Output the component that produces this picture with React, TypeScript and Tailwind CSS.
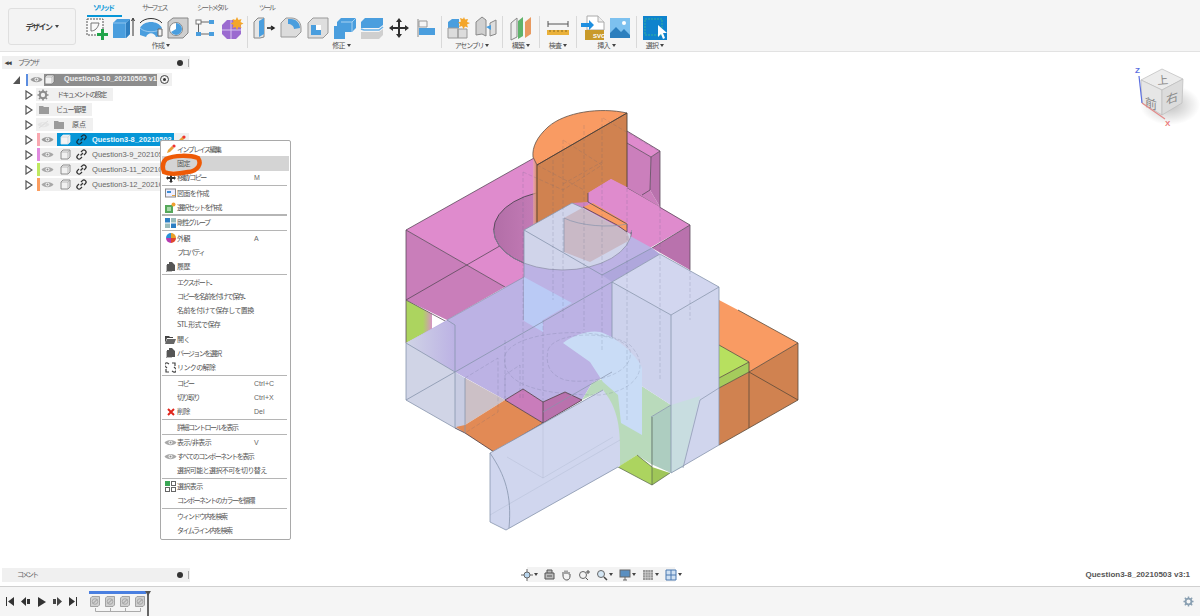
import React from "react";

const JP = "font-['Noto_Sans_CJK_JP','Liberation_Sans',sans-serif]";

function Eye({ off = false, dark = false }: { off?: boolean; dark?: boolean }) {
  return (
    <svg width="13" height="9" viewBox="0 0 13 9" className="shrink-0">
      <path d="M.5 4.5C3 1 10 1 12.5 4.5 10 8 3 8 .5 4.5Z" fill={off ? "#e4e4e4" : dark ? "#9a9a9a" : "#a8a8a8"} />
      <circle cx="6.5" cy="4.5" r="2" fill={off ? "#efefef" : "#f1f1f1"} />
      <circle cx="6.5" cy="4.5" r="1" fill={off ? "#ddd" : "#8d8d8d"} />
      {off && <path d="M2 8 11 1" stroke="#ddd" strokeWidth="1" />}
    </svg>
  );
}
function Tri() {
  return (
    <svg width="8" height="10" viewBox="0 0 8 10" className="shrink-0">
      <path d="M1 1 7 5 1 9Z" fill="#fff" stroke="#555" strokeWidth="1.2" />
    </svg>
  );
}
function Folder() {
  return (
    <svg width="12" height="10" viewBox="0 0 12 10" className="shrink-0">
      <path d="M1 1h4l1 1h5v7H1Z" fill="#9b9b9b" />
    </svg>
  );
}
function Cube({ white = false }: { white?: boolean }) {
  return (
    <svg width="11" height="11" viewBox="0 0 11 11" className="shrink-0">
      <path d="M1 3 3 1h7v7l-2 2H1Z" fill={white ? "#f4f4f4" : "#f1f1f1"} stroke={white ? "#dfe8ee" : "#777"} strokeWidth=".8" />
      <path d="M1 3h7v7M8 3l2-2" fill="none" stroke={white ? "#b9c7d0" : "#999"} strokeWidth=".6" />
    </svg>
  );
}
function Link({ white = false }: { white?: boolean }) {
  const c = white ? "#16303e" : "#333";
  return (
    <svg width="11" height="11" viewBox="0 0 11 11" className="shrink-0">
      <path d="M4.5 6.5 7 4M3 5 1.6 6.4a2 2 0 0 0 3 3L6 8M8 6l1.4-1.4a2 2 0 0 0-3-3L5 3" fill="none" stroke={c} strokeWidth="1.3" />
    </svg>
  );
}
function Gear({ size = 12, color = "#8c8c8c" }: { size?: number; color?: string }) {
  return (
    <svg width={size} height={size} viewBox="0 0 12 12" className="shrink-0">
      <circle cx="6" cy="6" r="3.2" fill="none" stroke={color} strokeWidth="2" />
      <path d="M6 .5v2M6 9.5v2M.5 6h2M9.5 6h2M2 2l1.5 1.5M8.5 8.5 10 10M10 2 8.5 3.5M3.5 8.5 2 10" stroke={color} strokeWidth="1.6" />
    </svg>
  );
}

function Row({ color, label, selected = false }: { color: string; label: string; selected?: boolean }) {
  return (
    <div className="flex items-center h-[15px] pl-[25px]">
      <Tri />
      <span className="w-[3px] h-[13px] ml-[4px]" style={{ background: color }} />
      <div className="flex items-center h-[13px] bg-[#f0f0f0]">
        <span className="ml-[1px] mr-[3px] flex"><Eye dark={selected} /></span>
        {selected ? (
          <div className="flex items-center h-[13px] w-[117px] bg-[#0696d7] pl-[3px] gap-[5px]">
            <Cube white />
            <Link white />
            <span className="text-[7.4px] font-bold text-[#e8f6fc] whitespace-nowrap font-['Liberation_Sans',sans-serif]">{label}</span>
          </div>
        ) : (
          <div className="flex items-center h-[13px] w-[117px] pl-[3px] gap-[5px]">
            <Cube />
            <Link />
            <span className="text-[7.6px] font-normal text-[#666] whitespace-nowrap font-['Liberation_Sans',sans-serif]">{label}</span>
          </div>
        )}
      </div>
      {selected && (
        <div className="h-[13px] w-[15px] bg-[#f0f0f0] flex items-center justify-center">
          <svg width="9" height="9" viewBox="0 0 9 9"><path d="M1 8 2 5 6 1l2 2-4 4Z" fill="#e8a13a" /><circle cx="7" cy="2" r="1.6" fill="#e33" /></svg>
        </div>
      )}
    </div>
  );
}

function MenuRow({ label, shortcut, icon, hover, kana }: { label: string; shortcut?: string; icon?: React.ReactNode; hover?: boolean; kana?: boolean }) {
  return (
    <div className={`relative flex items-center h-[14.25px] pl-[2px] mx-[1px] leading-none ${hover ? "bg-[#d4d4d4]" : ""}`}>
      <span className="w-[13px] flex justify-center shrink-0">{icon}</span>
      <span className={`text-[7px] text-[#555] whitespace-nowrap ${kana ? "tracking-[-1.5px]" : "tracking-[-0.6px]"} ${JP}`}>{label}</span>
      {shortcut && <span className="absolute left-[92px] text-[7px] text-[#666] font-['Liberation_Sans',sans-serif]">{shortcut}</span>}
    </div>
  );
}
const Sep = () => <div className="h-[1.2px] mx-[1px] mr-[3px] bg-[#b5b5b5]" />;

const I = {
  pencil: <svg width="10" height="10" viewBox="0 0 10 10"><path d="M1 9 2 6 6 2l2 2-4 4Z" fill="#e8a13a" /><circle cx="8" cy="2" r="1.6" fill="#e33" /></svg>,
  move: <svg width="10" height="10" viewBox="0 0 10 10"><path d="M5 0 7 2H6v2h2V3l2 2-2 2V6H6v2h1L5 10 3 8h1V6H2v1L0 5l2-2v1h2V2H3Z" fill="#333" /></svg>,
  draw: <svg width="11" height="10" viewBox="0 0 11 10"><rect x=".5" y="1" width="10" height="8" fill="#eef" stroke="#888" /><path d="M2 3h4v2H2z" fill="#3c8ed6" /><path d="M7 7h3v1H7z" fill="#e9a53a" /></svg>,
  set: <svg width="11" height="11" viewBox="0 0 11 11"><rect x="0" y="3" width="8" height="8" fill="#55a85a" /><rect x="2" y="5" width="4" height="4" fill="#a6d9a8" /><circle cx="8.5" cy="2.5" r="2" fill="#f0a030" /></svg>,
  rigid: <svg width="11" height="10" viewBox="0 0 11 10"><rect width="5" height="4.5" fill="#2d7fc4" /><rect x="6" width="5" height="4.5" fill="#9bb" /><rect y="5.5" width="5" height="4.5" fill="#9bb" /><rect x="6" y="5.5" width="5" height="4.5" fill="#2d7fc4" /></svg>,
  color: <svg width="10" height="10" viewBox="0 0 10 10"><path d="M5 5V0a5 5 0 0 1 5 5Z" fill="#e8a02a" /><path d="M5 5h5a5 5 0 0 1-5 5Z" fill="#e0462f" /><path d="M5 5v5a5 5 0 0 1-5-5Z" fill="#b53bb0" /><path d="M5 5H0a5 5 0 0 1 5-5Z" fill="#2a8fd8" /></svg>,
  history: <svg width="10" height="10" viewBox="0 0 10 10"><path d="M1 2h2V0h3l3 3v6H1Z" fill="#555" /><path d="M0 3v7h6" fill="none" stroke="#777" /></svg>,
  open: <svg width="11" height="9" viewBox="0 0 11 9"><path d="M0 1h4l1 1h3v1H2L0 8Z" fill="#444" /><path d="M2 4h9L9 9H0Z" fill="#666" /></svg>,
  unlink: <svg width="11" height="11" viewBox="0 0 11 11"><path d="M4 2 2.5 1A2 2 0 0 0 1 5l1 1M7 9l1.5 1A2 2 0 0 0 10 6L9 5M7 1l3 0 0 3M1 7v3h3" fill="none" stroke="#444" strokeWidth="1.2" /></svg>,
  del: <svg width="8" height="8" viewBox="0 0 8 8"><path d="M1 1 7 7M7 1 1 7" stroke="#e0261c" strokeWidth="2" /></svg>,
  eye: <Eye />,
  sel: <svg width="11" height="11" viewBox="0 0 11 11"><rect x="0" y="0" width="5" height="5" fill="#3aa655" /><rect x="6.5" y=".5" width="4" height="4" fill="none" stroke="#666" /><rect x=".5" y="6.5" width="4" height="4" fill="none" stroke="#666" /><rect x="6.5" y="6.5" width="4" height="4" fill="none" stroke="#666" /></svg>,
};

function Tool({ children }: { children: React.ReactNode }) {
  return <div className="w-[27px] h-[27px] flex items-center justify-center shrink-0">{children}</div>;
}
function Group({ label, w, lc = "", children }: { label: string; w: string; lc?: string; children: React.ReactNode }) {
  return (
    <div className={`flex flex-col items-center h-[35px] shrink-0 ${w}`}>
      <div className="flex justify-center">{children}</div>
      <div className={`h-[8px] flex items-center gap-[2px] text-[7px] text-[#555] whitespace-nowrap tracking-[-0.8px] ${lc} ${JP}`}>
        {label}
        <span className="w-0 h-0 border-x-[2px] border-x-transparent border-t-[3px] border-t-[#444]" />
      </div>
    </div>
  );
}
const VSep = () => <div className="w-px h-[32px] bg-[#d9d9d9] shrink-0" />;
const BLUE = "#4a9ede";
const tools = {
  sketch: <svg width="24" height="24" viewBox="0 0 24 24"><rect x="2" y="3" width="16" height="16" fill="#fafafa" stroke="#555" strokeDasharray="2 1" /><path d="M6 15V7h8M6 15c4 0 7-3 8-8" fill="none" stroke="#777" /><path d="M16 13h3v4h4v3h-4v4h-3v-4h-4v-3h4Z" fill="#21a44a" /></svg>,
  extrude: <svg width="24" height="24" viewBox="0 0 24 24"><path d="M1 7 5 3h13v15l-4 4H1Z" fill={BLUE} /><path d="M1 7h13v15M14 7l4-4" fill="none" stroke="#8cc3ee" /><path d="M14 7l4-4v15l-4 4Z" fill="#2f7fc0" /><path d="M21 20V3m-1.5 2L21 2l1.5 3" stroke="#333" fill="none" /></svg>,
  revolve: <svg width="26" height="24" viewBox="0 0 26 24"><path d="M2 12C6 4 20 4 24 12v8l-6 1c-2-5-8-5-10 0l-6-2Z" fill={BLUE} /><path d="M2 12c5 5 17 5 22 0" fill="none" stroke="#9acaf0" /><path d="M2 7C7 1 19 1 24 7" fill="none" stroke="#333" /><path d="M20 13h4v7h-4z" fill="#f2f2f2" stroke="#666" /></svg>,
  hole: <svg width="22" height="24" viewBox="0 0 22 24"><path d="M1 6 6 2h15v15l-5 5H1Z" fill="#cfcfcf" stroke="#888" /><circle cx="9" cy="13" r="6.5" fill="#fff" stroke="#888" /><path d="M9 13V7a6 6 0 0 1 0 12 6 6 0 0 1-5-3Z" fill="#4a9ede" /></svg>,
  pattern: <svg width="20" height="20" viewBox="0 0 20 20"><rect x="1" y="2" width="5" height="4" fill="#fff" stroke="#777" /><rect x="14" y="2" width="5" height="4" fill={BLUE} /><rect x="1" y="14" width="5" height="4" fill={BLUE} /><rect x="14" y="14" width="5" height="4" fill={BLUE} /><path d="M6 4h8M3.5 6v8M6 16h8" stroke="#666" /></svg>,
  star: <svg width="24" height="24" viewBox="0 0 24 24"><path d="M2 9 7 4h9l5 5v9l-5 5H7l-5-5Z" fill="#9b6bd0" /><path d="M2 14h19M11 4v19" stroke="#d8c6ef" /><path d="M17 1l1.5 3 3-1-1 3 3 1.500-3 1.500 1 3-3-1-1.500 3-1.500-3-3 1 1-3-3-1.500 3-1.500-1-3 3 1Z" fill="#f4a62a" /></svg>,
  press: <svg width="24" height="24" viewBox="0 0 24 24"><path d="M2 6 6 2h6v19l-4 1H2Z" fill="#e5e5e5" stroke="#888" /><path d="M7 5l5-3v16l-5 3Z" fill={BLUE} /><path d="M15 12h6m-2-2 3 2-3 2" stroke="#222" fill="none" strokeWidth="1.5" /></svg>,
  fillet: <svg width="22" height="22" viewBox="0 0 22 22"><path d="M1 20V6l5-5h5c6 0 10 4 10 10v4l-5 5Z" fill="#dcdcdc" stroke="#999" /><path d="M8 2h3c5 0 9 4 9 9l-6 1c0-3-3-5-6-5Z" fill={BLUE} /></svg>,
  shell: <svg width="22" height="22" viewBox="0 0 22 22"><path d="M1 6 6 1h15v15l-5 5H1Z" fill="#dedede" stroke="#999" /><path d="M4 8h10v10H4Z" fill="#fff" /><path d="M4 8h5v5h5v5H4Z" fill={BLUE} /></svg>,
  combine: <svg width="24" height="24" viewBox="0 0 24 24"><path d="M8 2h15v10l-4 4H4V6Z" fill={BLUE} /><path d="M1 10h11v13H1Z" fill={BLUE} /><path d="M8 6h11v10M19 6l4-4" stroke="#a7d2f2" fill="none" /></svg>,
  offset: <svg width="24" height="24" viewBox="0 0 24 24"><path d="M1 6 5 2h18v7l-4 3H1Z" fill={BLUE} /><path d="M1 13l3 1h15l4-3" fill="none" stroke="#6ab1e8" strokeWidth="1.500" /><path d="M1 16h18l4-3v6l-4 4H1Z" fill="#cfcfcf" /></svg>,
  move: <svg width="22" height="22" viewBox="0 0 22 22"><path d="M11 1l3 4h-2v5h5V8l4 3-4 3v-2h-5v5h2l-3 4-3-4h2v-5H5v2l-4-3 4-3v2h5V5H8Z" fill="#2f2f2f" /></svg>,
  align: <svg width="20" height="20" viewBox="0 0 20 20"><path d="M2 1v18" stroke="#888" /><path d="M3 3h8v6H3Z" fill="#f5f5f5" stroke="#999" /><path d="M3 10h16v7H3Z" fill={BLUE} /></svg>,
  comp: <svg width="26" height="24" viewBox="0 0 26 24"><path d="M2 6l4-3h7v9H2Z" fill={BLUE} /><path d="M2 12h10v10H2ZM12 13h9v9h-9Z" fill="#dcdcdc" stroke="#999" /><path d="M18 1l1 2.500 3-.5-1 3 3 1-3 1.500 1 3-3-1-1.500 2.500L16 10l-3 1 1-3-2-1.500 3-1L14 2l3 1Z" fill="#f4a62a" /></svg>,
  joint: <svg width="22" height="24" viewBox="0 0 22 24"><path d="M1 6l6-5 4 3v16l-4-2-6 1Z" fill="#d0d0d0" stroke="#888" /><path d="M21 4l-6 3v13l6-2Z" fill="#dedede" stroke="#888" /><path d="M11 11l5-2v5Z" fill={BLUE} /></svg>,
  plane: <svg width="22" height="26" viewBox="0 0 22 26"><path d="M1 8l6-5v19l-6 3Z" fill="#ededed" stroke="#888" /><path d="M8 6l5-4v19l-5 3Z" fill="#5fb36b" /><path d="M15 7l6-5v17l-6 4Z" fill="#e8995f" /></svg>,
  measure: <svg width="22" height="16" viewBox="0 0 22 16"><path d="M1 1v6M21 1v6M1 4h20" stroke="#555" /><rect x="0" y="10" width="22" height="5" fill="#eab13a" /><path d="M3 10v2M7 10v2M11 10v2M15 10v2M19 10v2" stroke="#8b6a18" /></svg>,
  insert: <svg width="24" height="26" viewBox="0 0 24 26"><path d="M6 1h11l6 6v8H6Z" fill="#fff" stroke="#aaa" /><path d="M17 1v6h6" fill="#eee" stroke="#aaa" /><rect x="4" y="15" width="19" height="10" fill="#c99a2a" /><text x="12" y="23" fontSize="6" fontWeight="700" fill="#fff" fontFamily="Liberation Sans">SVG</text><path d="M0 8h8V5l5 5-5 5v-3H0Z" fill="#1e8fe0" /></svg>,
  image: <svg width="20" height="20" viewBox="0 0 20 20"><rect width="20" height="20" fill="#7dc1ef" /><path d="M0 20v-5l6-6 5 5 3-3 6 6v3Z" fill="#2c7fbe" /><circle cx="14" cy="5" r="2" fill="#fff" /></svg>,
  select: <svg width="24" height="24" viewBox="0 0 24 24"><rect width="24" height="24" fill="#0f83cd" /><rect x="2" y="3" width="17" height="16" fill="none" stroke="#35b29a" strokeDasharray="2 1" /><path d="M15 9v12l3-3 2 5 2-1-2-5h4Z" fill="#fff" /></svg>,
};

function NavIcon({ children, caret }: { children: React.ReactNode; caret?: boolean }) {
  return (
    <div className="flex items-center gap-[1px]">
      {children}
      {caret && <span className="w-0 h-0 border-x-[2px] border-x-transparent border-t-[3px] border-t-[#444]" />}
    </div>
  );
}

const L = "#8794ac";
function Model() {
  return (
    <svg viewBox="0 52 1200 534" className="absolute inset-0 w-[1200px] h-[534px]">
      <defs>
        <clipPath id="holeClip"><ellipse cx="562.7" cy="230" rx="69" ry="40" /></clipPath>
        <linearGradient id="holeG" x1="0" x2="1"><stop offset="0" stopColor="#b26ea7" /><stop offset=".5" stopColor="#cf84c0" /></linearGradient>
        <linearGradient id="sliver" x1="0" x2="1"><stop offset="0" stopColor="#f0b795" stopOpacity=".4" /><stop offset="1" stopColor="#d08250" /></linearGradient>
        <linearGradient id="greenFade" x1="0" x2="1"><stop offset="0" stopColor="#acd45f" /><stop offset=".65" stopColor="#acd45f" /><stop offset="1" stopColor="#d693c4" /></linearGradient>
        <linearGradient id="fadeL" x1="0" x2="1"><stop offset="0" stopColor="#d0d4e6" /><stop offset="1" stopColor="#bcb2e4" /></linearGradient>
        <radialGradient id="shadow"><stop offset="0" stopColor="#000" stopOpacity=".25" /><stop offset="1" stopColor="#000" stopOpacity="0" /></radialGradient>
      </defs>
      {/* right orange */}
      <polygon points="719,300 738,310 798,343 749,372 749,362 719,345" fill="#f99b63" />
      <polygon points="749,372 798,343 798,400 749,428" fill="#d08250" />
      <polygon points="719,388 749,372 749,428 719,445" fill="#d08250" />
      <polygon points="719,345 749,362 719,378" fill="#b7e05f" />
      <polygon points="719,378 749,362 749,372 719,388" fill="#a5cb5c" />
      <path d="M738,310 798,343 798,400 749,428 719,445M798,343 749,372 749,428M749,362V372L719,388M719,345 749,362 719,378M749,372 798,400" fill="none" stroke="#5b4a3a" strokeWidth=".8" />

      {/* pink block */}
      <polygon points="406,230 534,158 627,131 627,188 660,207 690,225 524,320 505,287" fill="#df8bcd" />
      <polygon points="406,230 505,287 447,320 406,300" fill="#c97eba" />
      <polygon points="627,143 651,157 650,190 660,207 627,188" fill="#cb7fbc" />
      <polygon points="651,157 660,151 660,207 650,190" fill="#b972ad" />
      <polygon points="627,131 660,151 651,157 627,143" fill="#df8bcd" />
      <polygon points="690,225 690,270 652,248" fill="#b972ad" />
      <polygon points="406,300 432,314 432,329 406,343" fill="url(#greenFade)" />
      <path d="M406,230 534,158M627,131 660,151V207M627,143 651,157 650,190 642,195M651,157 660,151M627,188 690,225V270M690,225 652,248M406,230V343M406,230 505,287M406,300 524,232M406,300 447,322" fill="none" stroke="#5a4a5a" strokeWidth=".8" />

      {/* hole */}
      <ellipse cx="562.7" cy="230" rx="69" ry="40" fill="url(#holeG)" stroke="#4f4553" strokeWidth=".9" />

      {/* orange half cylinder */}
      <path d="M533,157 537,165 537,233 533,225Z" fill="url(#sliver)" />
      <polygon points="537,165 627,113 627,187 611,179 588,193 588,202 572,203 537,233" fill="#d08250" />
      <path d="M627,113C600,107 565,112 548,127 537,137 532,147 533,157L537,165Z" fill="#f99b63" stroke="#5e5048" strokeWidth=".8" />
      <path d="M537,165V233M627,113V187M537,165 627,113" fill="none" stroke="#4e3e33" strokeWidth=".9" />
      <polygon points="588,193 611,179 660,207 640,232 627,232 588,207" fill="#df8bcd" />

      {/* lavender over-pink region */}
      <polygon points="406,343 447,320 524,277 524,235 632,237 652,248 612,282 612,372 592,383 582,400 565,392 543,402 523,389 505,400 455,372" fill="#bcb2e4" />
      <polygon points="406,343 432,329 450,320 455,340 455,372" fill="url(#fadeL)" />
      <polygon points="602,275 652,248 660,254 612,282" fill="#afa7dc" />
      <g clipPath="url(#holeClip)">
        <polygon points="524,230 572,203 583,208 627,232 640,240 620,290 524,290" fill="#d0d4ea" />
        <polygon points="564,218 582,208 627,232 630,240 590,262 564,252" fill="#c9b9c6" />
      </g>
      <polygon points="583,207 593,203 627,223 627,232 617,225" fill="#f99b63" />
      <path d="M588,193V202L627,224V232M583,207 617,225 627,232" fill="none" stroke="#4f4553" strokeWidth=".8" />
      <path d="M524,230 572,203 583,208M524,230V320M524,230 602,275M602,275 652,248" fill="none" stroke={L} strokeWidth=".8" />
      <path d="M564,218V252M564,218C580,226 610,228 627,224" fill="none" stroke={L} strokeWidth=".7" />
      <path d="M493.700,230A69,40 0 0 0 631.700,230" fill="none" stroke="#8a8ca4" strokeWidth=".7" />
      <polygon points="524,277 572,303 543,320 543,332 524,321" fill="#bacaf5" />

      {/* lower faces */}
      <polygon points="406,343 455,372 455,428 406,400" fill="#d0d4e6" />
      <polygon points="455,372 465,378 465,433 455,428" fill="#c8cce2" />
      <polygon points="465,378 505,400 465,425" fill="#ccc0c6" />
      <polygon points="456,427 465,425 505,400 543,423 494,452 465,433" fill="#e28a55" />
      <polygon points="505,400 523,389 543,402 543,423" fill="#c97cbb" />
      <polygon points="543,402 565,392 582,400 543,423" fill="#b972ad" />
      <path d="M505,400 543,423M523,389 543,402V423M565,392 582,400 543,423 494,452 465,433 455,428M505,400 523,389M543,402 565,392" fill="none" stroke="#4a3a40" strokeWidth=".8" />
      <path d="M406,343V400L455,428V372L406,343M406,400 455,372M455,372 612,282M465,378V433M447,320 455,325V372" fill="none" stroke={L} strokeWidth=".8" />

      {/* green */}
      <polygon points="582,400 592,383 620,372 671,405 651,417 651,464 637,455 620,466 603,390" fill="#b9dabb" />
      <polygon points="618,467 637,455 652,467 652,485" fill="#acd45f" />
      <polygon points="652,467 670,473 652,485" fill="#9fc658" />
      <polygon points="651,417 671,405 671,473 651,464" fill="#adcdc0" />
      <path d="M618,467 652,485 670,473M637,455 652,467M652,417V485" fill="none" stroke="#55614a" strokeWidth=".7" />

      {/* tall block */}
      <polygon points="612,282 671,315 719,287 660,254" fill="#d2d6ef" />
      <polygon points="612,282 671,315 671,405 620,372 612,372" fill="#cdd2ec" />
      <polygon points="671,315 719,287 719,445 671,473" fill="#d0d5ed" />
      <polygon points="671,405 700,396 683,467 671,473" fill="#c8dde0" />
      <path d="M612,282 671,315 719,287 660,254 612,282M612,282V372M671,315V473M719,287V445L671,473M651,417 671,405" fill="none" stroke={L} strokeWidth=".8" />
      <path d="M719,388 700,400 683,468" fill="none" stroke={L} strokeWidth=".7" />

      {/* light arc */}
      <path d="M563,343C575,334 590,330 600,332 620,338 640,360 642,368V435L621,423 618,395 603,382 590,362Z" fill="#c9dcf6" />

      {/* half cylinder */}
      <path d="M490,453 603,390C615,405 620,420 620,450V466L506,530 490,522Z" fill="#d0d6ee" />
      <path d="M490,453V522L506,530 618,467M490,453 603,390M490,453C505,475 512,495 509,528" fill="none" stroke={L} strokeWidth=".8" />

      {/* hidden lines */}
      <g fill="none" stroke="#55607a" strokeOpacity=".3" strokeWidth=".6" strokeDasharray="4 2">
        <path d="M523,172V400M553,160V300M563,140V320M584,125V330M602,118V350M627,188V420M660,207V380M690,270V320" />
        <path d="M523,172 563,190 602,165 563,140M563,184 602,162M603,118 660,152M537,165 584,190M543,320V402M505,340V400" />
        <path d="M505,355C515,330 600,325 630,345 650,365 640,390 600,395 540,395 500,385 505,355Z" />
        <path d="M548,350C555,330 620,330 630,350 635,375 590,385 565,380 550,375 545,365 548,350Z" />
        <path d="M505,400V375L520,365V400M465,378 498,358V412L465,433" />
      </g>
      <path d="M507,457 543,478 613,437M543,402V478M490,515 620,440" fill="none" stroke={L} strokeOpacity=".3" strokeWidth=".6" />
      <path d="M447,320 524,277M612,372 543,412" fill="none" stroke={L} strokeWidth=".7" />

      {/* view cube */}
      <ellipse cx="1170" cy="105" rx="30" ry="20" fill="url(#shadow)" />
      <polygon points="1162,69 1183,79 1162,90 1141,80" fill="#ececec" stroke="#bbb" strokeWidth=".7" />
      <polygon points="1141,80 1162,90 1162,115 1142,103" fill="#e6e6e6" stroke="#bbb" strokeWidth=".7" />
      <polygon points="1162,90 1183,79 1182,103 1162,115" fill="#dcdcdc" stroke="#bbb" strokeWidth=".7" />
      <text x="1157" y="84" fontSize="11" fill="#8a8a8a" fontFamily="Noto Sans CJK JP" transform="rotate(-5 1162 79)">上</text>
      <text x="1145" y="106" fontSize="12" fill="#8a8a8a" fontFamily="Noto Sans CJK JP" transform="skewY(20) translate(0,-417)">前</text>
      <text x="1166" y="105" fontSize="12" fill="#8a8a8a" fontFamily="Noto Sans CJK JP" transform="skewY(-20) translate(0,424)">右</text>
      <path d="M1139,76 1142,103" stroke="#5b6fe0" strokeWidth="1.2" />
      <path d="M1142,103 1165,119" stroke="#e28a8a" strokeWidth="1.2" />
      <text x="1135" y="73" fontSize="8" fontWeight="700" fill="#5b6fe0" fontFamily="Liberation Sans">Z</text>
      <text x="1165" y="126" fontSize="8" fontWeight="700" fill="#ea7a7a" fontFamily="Liberation Sans">X</text>
    </svg>
  );
}

export default function App() {
  return (
    <div className="w-[1200px] h-[616px] flex flex-col bg-white overflow-hidden font-['Liberation_Sans',sans-serif]">
      {/* toolbar */}
      <header className="h-[52px] shrink-0 flex bg-[#f5f5f5] border-b border-[#e2e2e2]">
        <div className="ml-[8px] mt-[8px] w-[68px] h-[37px] shrink-0 border border-[#dfdfdf] rounded-[3px] bg-[#f3f3f3] flex items-center justify-center gap-[3px]">
          <span className={`text-[8px] font-bold text-[#444] tracking-[-1.5px] ${JP}`}>デザイン</span>
          <span className="w-0 h-0 border-x-[2px] border-x-transparent border-t-[3px] border-t-[#444]" />
        </div>
        <div className="ml-[5px] flex flex-col">
          <nav className={`h-[14px] flex items-center text-[7px] text-[#666] tracking-[-2px] ${JP}`}>
            <div className="w-[50px] ml-[2px] relative flex justify-center pr-[10px] text-[#0696d7] font-bold">
              ソリッド
              <span className="absolute left-[4px] top-[13px] w-[35px] h-[2px] bg-[#0696d7]" />
            </div>
            <span className="ml-[9px] w-[55px]">サーフェス</span>
            <span className="w-[62px]">シート メタル</span>
            <span>ツール</span>
          </nav>
          <div className="flex items-center">
            <Group label="作成" w="w-[166px]" lc="mr-[6px]">
              <Tool>{tools.sketch}</Tool><Tool>{tools.extrude}</Tool><Tool>{tools.revolve}</Tool><Tool>{tools.hole}</Tool><Tool>{tools.pattern}</Tool><Tool>{tools.star}</Tool>
            </Group>
            <VSep />
            <Group label="修正" w="w-[193px]" lc="mr-[6px]">
              <Tool>{tools.press}</Tool><Tool>{tools.fillet}</Tool><Tool>{tools.shell}</Tool><Tool>{tools.combine}</Tool><Tool>{tools.offset}</Tool><Tool>{tools.move}</Tool><Tool>{tools.align}</Tool>
            </Group>
            <VSep />
            <Group label="アセンブリ" w="w-[60px]" lc="tracking-[-1.2px]"><Tool>{tools.comp}</Tool><Tool>{tools.joint}</Tool></Group>
            <VSep />
            <Group label="構築" w="w-[36px]"><Tool>{tools.plane}</Tool></Group>
            <VSep />
            <Group label="検査" w="w-[36px]"><Tool>{tools.measure}</Tool></Group>
            <VSep />
            <Group label="挿入" w="w-[59px]"><Tool>{tools.insert}</Tool><Tool>{tools.image}</Tool></Group>
            <VSep />
            <Group label="選択" w="w-[36px]"><Tool>{tools.select}</Tool></Group>
          </div>
        </div>
      </header>

      {/* canvas */}
      <main className="relative flex-1 flex flex-col">
        <Model />
        <div className={`relative mt-[4px] ml-[2px] w-[188px] h-[13px] bg-[#f0f0f0] flex items-center pl-[3px] text-[7px] text-[#666] tracking-[-2px] ${JP}`}>
          <span className="text-[7px] mr-[7px] text-[#444] font-bold tracking-[-1px]">◂◂</span>ブラウザ
          <span className="absolute right-[7px] w-[6px] h-[6px] rounded-full bg-[#333]" />
          <span className="absolute right-[1px] w-[1px] h-[8px] bg-[#aaa]" />
        </div>
        <div className="relative mt-[3px] flex flex-col">
          {/* root */}
          <div className="flex items-center h-[15px] pl-[13px]">
            <svg width="8" height="8" viewBox="0 0 8 8" className="shrink-0"><path d="M7 0V8H0Z" fill="#555" /></svg>
            <span className="w-[2px] h-[12px] ml-[5px] bg-[#5b8de0]" />
            <div className="flex items-center h-[13px] bg-[#f0f0f0] pl-[2px] pr-[3px]">
              <Eye dark />
              <div className="ml-[1px] w-[113px] h-[12px] bg-[#8d8d8d] flex items-center">
                <Cube />
                <span className="ml-[9px] text-[7.3px] font-bold text-[#f2f2f2] whitespace-nowrap">Question3-10_20210505 v1</span>
              </div>
              <span className="ml-[3px] w-[9px] h-[9px] rounded-full border border-[#444] flex items-center justify-center">
                <span className="w-[3px] h-[3px] rounded-full bg-[#333]" />
              </span>
            </div>
          </div>
          <div className="flex items-center h-[15px] pl-[25px]">
            <Tri />
            <div className={`ml-[3px] w-[77px] h-[13px] bg-[#f0f0f0] flex items-center pl-[1px] text-[7px] text-[#555] tracking-[-1.6px] ${JP}`}>
              <Gear /><span className="ml-[8px] whitespace-nowrap">ドキュメントの設定</span>
            </div>
          </div>
          <div className="flex items-center h-[15px] pl-[25px]">
            <Tri />
            <div className={`ml-[3px] w-[56px] h-[13px] bg-[#f0f0f0] flex items-center pl-[2px] text-[7px] text-[#555] tracking-[-1.2px] ${JP}`}>
              <Folder /><span className="ml-[6px] whitespace-nowrap">ビュー管理</span>
            </div>
          </div>
          <div className="flex items-center h-[15px] pl-[25px]">
            <Tri />
            <div className={`ml-[3px] w-[57px] h-[13px] bg-[#f0f0f0] flex items-center pl-[1px] text-[7px] text-[#555] ${JP}`}>
              <Eye off /><span className="ml-[3px] flex"><Folder /></span><span className="ml-[7px] whitespace-nowrap">原点</span>
            </div>
          </div>
          <Row color="#f9a8b0" label="Question3-8_20210503" selected />
          <Row color="#e08adf" label="Question3-9_20210503" />
          <Row color="#bfe860" label="Question3-11_20210503" />
          <Row color="#fb9d5f" label="Question3-12_20210503" />
        </div>

        {/* context menu */}
        <div className="absolute left-[160px] top-[88px] w-[131px] h-[400px] bg-white border border-[#a9a9a9] rounded-[2px] pt-[1px]">
          <MenuRow icon={I.pencil} label="インプレイス編集" kana />
          <MenuRow label="固定" hover />
          <MenuRow icon={I.move} label="移動/コピー" shortcut="M" kana />
          <Sep />
          <MenuRow icon={I.draw} label="図面を作成" />
          <MenuRow icon={I.set} label="選択セットを作成" kana />
          <Sep />
          <MenuRow icon={I.rigid} label="剛性グループ" kana />
          <Sep />
          <MenuRow icon={I.color} label="外観" shortcut="A" />
          <MenuRow label="プロパティ" kana />
          <MenuRow icon={I.history} label="履歴" />
          <Sep />
          <MenuRow label="エクスポート..." kana />
          <MenuRow label="コピーを名前を付けて保存..." kana />
          <MenuRow label="名前を付けて保存して置換" />
          <MenuRow label="STL 形式で保存" />
          <MenuRow icon={I.open} label="開く" />
          <MenuRow icon={I.history} label="バージョンを選択" kana />
          <MenuRow icon={I.unlink} label="リンクの解除" />
          <Sep />
          <MenuRow label="コピー" shortcut="Ctrl+C" kana />
          <MenuRow label="切り取り" shortcut="Ctrl+X" kana />
          <MenuRow icon={I.del} label="削除" shortcut="Del" />
          <Sep />
          <MenuRow label="詳細コントロールを表示" kana />
          <Sep />
          <MenuRow icon={I.eye} label="表示/非表示" shortcut="V" />
          <MenuRow icon={I.eye} label="すべてのコンポーネントを表示" kana />
          <MenuRow label="選択可能と選択不可を切り替え" />
          <Sep />
          <MenuRow icon={I.sel} label="選択表示" />
          <MenuRow label="コンポーネントのカラーを循環" kana />
          <Sep />
          <MenuRow label="ウィンドウ内を検索" kana />
          <MenuRow label="タイムライン内を検索" kana />
        </div>

        {/* orange annotation */}
        <svg width="44" height="26" viewBox="0 0 44 26" className="absolute left-[160px] top-[100px]">
          <path d="M6 7C14 3 30 3 38 6 42 12 38 19 28 20 18 22 8 22 4 20 2 15 3 10 6 7Z" fill="none" stroke="#ee5a06" strokeWidth="4.500" />
        </svg>

        {/* bottom of canvas */}
        <div className="relative mt-auto mb-[4px] h-[15px] flex items-center">
          <div className={`relative ml-[2px] w-[188px] h-[14px] bg-[#f0f0f0] flex items-center pl-[15px] text-[7px] text-[#666] tracking-[-2px] ${JP}`}>
            コメント
            <span className="absolute right-[7px] w-[6px] h-[6px] rounded-full bg-[#333]" />
            <span className="absolute right-[1px] w-[1px] h-[8px] bg-[#aaa]" />
          </div>
          <div className="ml-[337px] w-[148px] h-[15px] bg-[#f3f3f3] flex items-center justify-center gap-[6px]">
            <NavIcon caret><svg width="12" height="12" viewBox="0 0 12 12"><circle cx="6" cy="6" r="3" fill="#b9d6ee" stroke="#666" /><path d="M6 0v3M6 9v3M0 6h3M9 6h3" stroke="#666" /></svg></NavIcon>
            <NavIcon><svg width="11" height="11" viewBox="0 0 11 11"><path d="M1 4h9v6H1ZM3 4V1h5v3" fill="#bbb" stroke="#555" /><path d="M3 7h5" stroke="#555" /></svg></NavIcon>
            <NavIcon><svg width="11" height="12" viewBox="0 0 11 12"><path d="M2 6V3m2 2V1.500m2 3.500V1.500m2 4V3M2 6c0 4 2 5 4 5s3-2 3-4V5" fill="none" stroke="#555" /></svg></NavIcon>
            <NavIcon><svg width="12" height="12" viewBox="0 0 12 12"><circle cx="5" cy="6" r="3.500" fill="none" stroke="#666" /><path d="M8 9l2 2M10 1v4M8 3h4" stroke="#555" /></svg></NavIcon>
            <NavIcon caret><svg width="12" height="12" viewBox="0 0 12 12"><circle cx="5" cy="5" r="3.500" fill="#d4e6f4" stroke="#666" /><path d="M8 8l3 3" stroke="#444" strokeWidth="1.500" /></svg></NavIcon>
            <NavIcon caret><svg width="12" height="12" viewBox="0 0 12 12"><rect x="1" y="1" width="10" height="7" fill="#5a8fc0" stroke="#666" /><path d="M4 11h4M6 8v3" stroke="#666" /></svg></NavIcon>
            <NavIcon caret><svg width="12" height="12" viewBox="0 0 12 12"><path d="M1 1h10v10H1Z" fill="#999" /><path d="M3.500 1v10M6 1v10M8.500 1v10M1 3.500h10M1 6h10M1 8.500h10" stroke="#ddd" strokeWidth=".5" /></svg></NavIcon>
            <NavIcon caret><svg width="12" height="12" viewBox="0 0 12 12"><path d="M1 1h10v10H1Z" fill="#cfe0f2" stroke="#4b78b0" /><path d="M6 1v10M1 6h10" stroke="#4b78b0" /></svg></NavIcon>
          </div>
          <span className="ml-auto mr-[10px] text-[8px] font-bold text-[#555] whitespace-nowrap">Question3-8_20210503 v3:1</span>
        </div>
      </main>

      {/* timeline */}
      <footer className="relative h-[30px] shrink-0 bg-[#f5f5f5] border-t border-[#d0d0d0] flex items-center">
        <div className="ml-[6px] flex items-center gap-[6px] text-[#333]">
          <svg width="9" height="9" viewBox="0 0 9 9"><path d="M1 0v9H0V0ZM8 0v9L2 4.500Z" fill="#333" /></svg>
          <svg width="10" height="9" viewBox="0 0 10 9"><path d="M5 0v9L0 4.500ZM6 2h3v5H6Z" fill="#333" /></svg>
          <svg width="9" height="10" viewBox="0 0 9 10"><path d="M1 0 9 5 1 10Z" fill="#333" /></svg>
          <svg width="10" height="9" viewBox="0 0 10 9"><path d="M5 0v9l5-4.500ZM1 2h3v5H1Z" fill="#444" /></svg>
          <svg width="9" height="9" viewBox="0 0 9 9"><path d="M8 0v9h1V0ZM1 0v9l6-4.500Z" fill="#333" /></svg>
        </div>
        <div className="relative ml-[12px] w-[60px] h-[30px]">
          <span className="absolute left-0 top-[4px] w-[57px] h-[3px] bg-[#4a7fe0]" />
          <div className="absolute left-[1px] top-[9px] flex gap-[5px]">
            {[0, 1, 2, 3].map((i) => (
              <svg key={i} width="10" height="11" viewBox="0 0 10 11">
                <path d="M.5 2 2 .5h7.500V9L8 10.500H.5Z" fill="#cfcfcf" stroke="#888" strokeWidth=".7" />
                <circle cx="5" cy="5.500" r="2.800" fill="none" stroke="#999" strokeWidth=".7" />
                <path d="M3 7.500 7 3.500" stroke="#888" strokeWidth=".8" />
              </svg>
            ))}
          </div>
          <svg width="48" height="4" viewBox="0 0 48 4" className="absolute left-[6px] top-[21px]"><path d="M.5 0v3.500h45V0M15.500 0v3M30.500 0v3" fill="none" stroke="#aaa" /></svg>
          <span className="absolute left-[58px] top-[7px] w-[2px] h-[23px] bg-[#666]" />
          <span className="absolute left-[56px] top-[4px] w-0 h-0 border-x-[3.500px] border-x-transparent border-t-[5px] border-t-[#555]" />
        </div>
        <span className="ml-auto mr-[6px]"><Gear size={11} color="#8aa0b2" /></span>
      </footer>
    </div>
  );
}
